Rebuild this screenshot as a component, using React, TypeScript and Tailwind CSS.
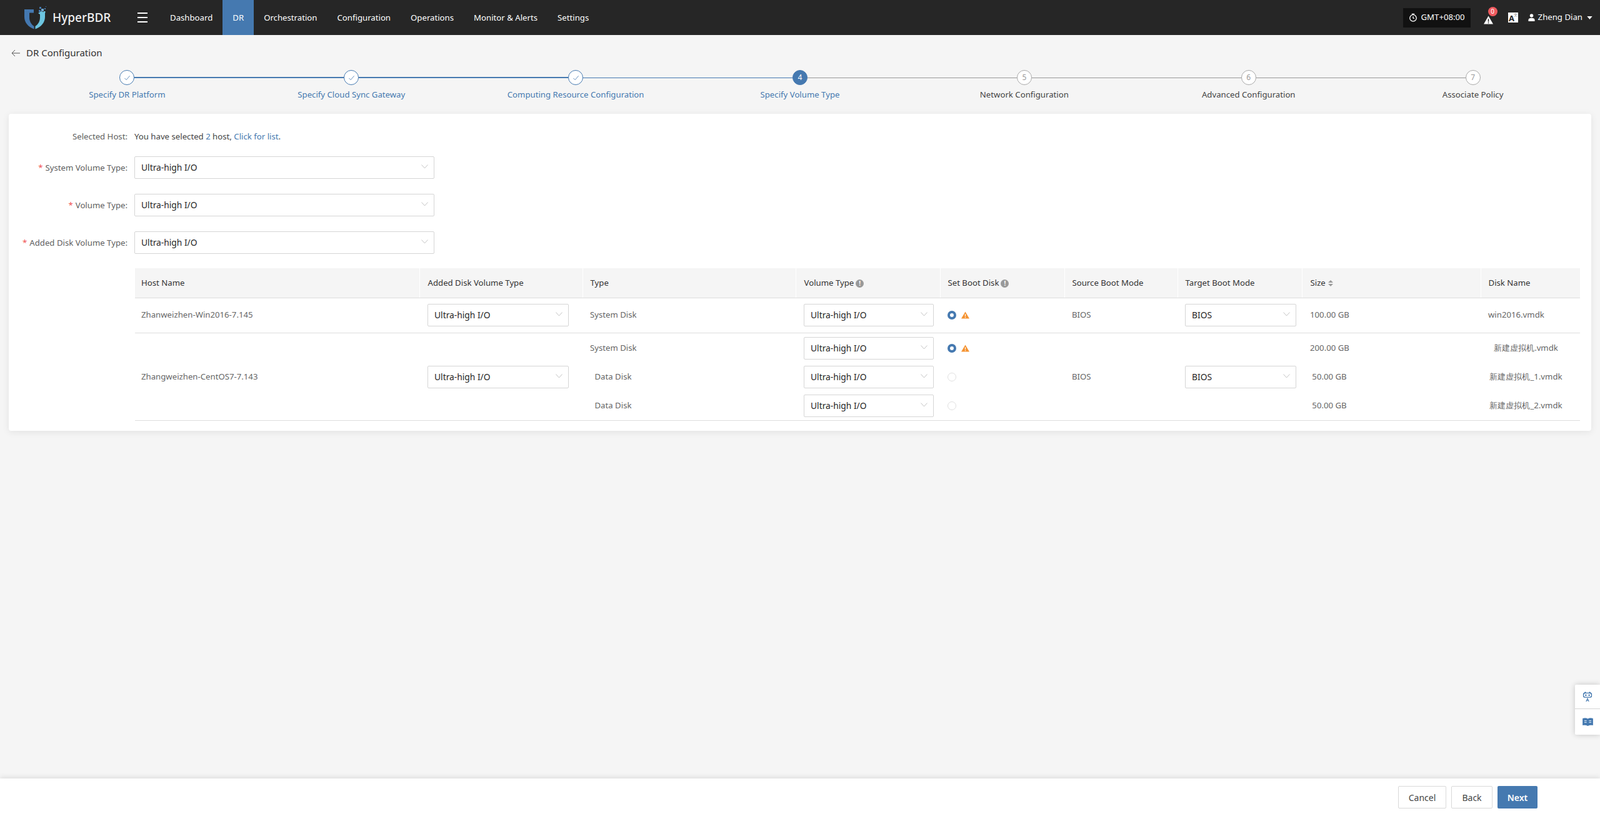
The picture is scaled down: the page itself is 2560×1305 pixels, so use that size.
const navItems = ["Dashboard", "DR", "Orchestration", "Configuration", "Operations", "Monitor & Alerts", "Settings"];

const steps = [
  "Specify DR Platform",
  "Specify Cloud Sync Gateway",
  "Computing Resource Configuration",
  "Specify Volume Type",
  "Network Configuration",
  "Advanced Configuration",
  "Associate Policy",
];

const Logo = () => (
  <svg viewBox="38 8 36 40" className="w-9 h-10 shrink-0">
    <path d="M39 15H54V20.5H47V28C47 34 50 39 54.500 42V46.500C45 43 39 36 39 27Z" fill="#4478b0" />
    <path d="M72 20V27C72 36 66 43 56.500 46.500V42C61 39 64 34 64 28V23L61 21 66 18Z" fill="#6cc5e0" />
    <rect x="63" y="11" width="3" height="3" fill="#4478b0" />
    <rect x="66" y="14" width="4" height="4" fill="#6fa8d0" />
    <rect x="70" y="18" width="2.500" height="2.500" fill="#6cc5e0" />
    <rect x="71" y="13" width="2" height="2" fill="#4478b0" />
    <rect x="73" y="10" width="1" height="1" fill="#4478b0" />
    <rect x="62" y="16" width="3" height="3" fill="#4478b0" />
  </svg>
);

const Header = () => (
  <header className="h-14 shrink-0 bg-[#262626] flex items-center text-white text-[13.200px]">
    <div className="flex items-center ml-[38px] gap-[10px] w-[182px]">
      <Logo />
      <span className="text-[19px] font-medium text-[#f0f0f0]">HyperBDR</span>
    </div>
    <div className="w-4 h-4 flex flex-col justify-between">
      <span className="h-[2px] bg-white" />
      <span className="h-[2px] bg-white" />
      <span className="h-[2px] bg-white" />
    </div>
    <nav className="flex h-full ml-5">
      {navItems.map((item) => (
        <a key={item} className={`h-full flex items-center px-4 pt-[1px] ${item === "DR" ? "bg-[#4579b0]" : ""}`}>
          {item}
        </a>
      ))}
    </nav>
    <div className="ml-auto flex items-center">
      <div className="h-[31px] w-[108px] bg-[#111111] flex items-center justify-center gap-[6px]">
        <svg viewBox="0 0 16 16" className="w-[14px] h-[14px]" fill="none" stroke="white" strokeWidth="1.500">
          <circle cx="8" cy="9" r="6" />
          <path d="M8 6V9L10 10M5.500 1.500H10.500" />
        </svg>
        <span>GMT+08:00</span>
      </div>
      <div className="relative ml-[21px] w-[15px] h-[15px] mt-[8px]">
        <svg viewBox="0 0 16 14" className="w-[15px] h-[14px]">
          <path d="M8 0L16 14H0Z" fill="white" />
          <path d="M7.200 5H8.800V10H7.200ZM7.200 11H8.800V12.500H7.200Z" fill="#262626" />
        </svg>
        <span className="absolute -top-[14px] left-[7px] w-[15px] h-[15px] rounded-full bg-[#ef5a5f] text-[10px] leading-[15px] text-center">
          0
        </span>
      </div>
      <div className="ml-[24px] w-4 h-4 bg-white flex items-center justify-center text-[#262626] relative">
        <span className="text-[13px] font-bold leading-none mr-[4px] mt-[2px]">A</span>
        <span className="absolute top-[1px] right-[1px] text-[6px] leading-none text-[#777]">文</span>
      </div>
      <svg viewBox="0 0 12 13" className="ml-4 w-[11px] h-[12px]" fill="white">
        <circle cx="6" cy="3.200" r="3" />
        <path d="M0.500 13V10.500C0.500 8.500 2.500 7.300 6 7.300S11.500 8.500 11.500 10.500V13Z" />
      </svg>
      <span className="ml-[5px]">Zheng Dian</span>
      <svg viewBox="0 0 10 6" className="ml-[7px] mr-3 w-[9px] h-[5px]" fill="white">
        <path d="M0 0H10L5 6Z" />
      </svg>
    </div>
  </header>
);

// connector segment classes, index = gap between step i and i+1
const connector = [
  "h-[2px] bg-[#4579b0]",
  "h-[2px] bg-[#4579b0]",
  "h-[1px] bg-[#4579b0]",
  "h-[1px] bg-[#999999]",
  "h-[1px] bg-[#999999]",
  "h-[1px] bg-[#999999]",
];

const Stepper = () => (
  <div className="grid grid-cols-7 mx-[24px] mt-[14px]">
    {steps.map((label, i) => {
      const done = i < 3;
      const active = i === 3;
      return (
        <div key={label} className="flex flex-col items-center">
          <div className="flex items-center w-full h-6">
            <span className={`flex-1 ${i === 0 ? "" : connector[i - 1]}`} />
            <span
              className={`w-6 h-6 rounded-full border flex items-center justify-center text-[12px] shrink-0 ${
                active
                  ? "bg-[#4579b0] border-[#4579b0] text-white"
                  : done
                    ? "bg-white border-[#4579b0] text-[#4579b0]"
                    : "bg-white border-[#a8a8a8] text-[#999999]"
              }`}
            >
              {done ? (
                <svg viewBox="0 0 12 12" className="w-[11px] h-[11px]" fill="none" stroke="#4579b0" strokeWidth="0.900">
                  <path d="M1.500 6.500L4.500 9.500L10.500 2.500" />
                </svg>
              ) : (
                i + 1
              )}
            </span>
            <span className={`flex-1 ${i === 6 ? "" : connector[i]}`} />
          </div>
          <span className={`mt-[5px] leading-5 text-[13.200px] ${done || active ? "text-[#4579b0]" : "text-[#444444]"}`}>{label}</span>
        </div>
      );
    })}
  </div>
);

const Select = ({ value, width }: { value: string; width: string }) => (
  <div className={`${width} h-9 bg-white border border-[#d5d5d5] rounded-[2px] flex items-center justify-between pl-[10px] pr-[9px] text-[13.800px] text-[#262626]`}>
    <span className="pt-[1px]">{value}</span>
    <svg viewBox="0 0 11 7" className="w-[11px] h-[7px] -mt-[3px]" fill="none" stroke="#c4c4c4" strokeWidth="1">
      <path d="M0.500 0.500L5.500 6L10.500 0.500" />
    </svg>
  </div>
);

const FormRow = ({ label, required, children }: { label: string; required?: boolean; children: React.ReactNode }) => (
  <div className="flex items-center">
    <label className="w-[190px] text-right text-[13.200px] text-[#606060] shrink-0 mr-[11px] pt-[1px] whitespace-nowrap">
      {required && <span className="text-[#f05050] mr-1">*</span>}
      {label}:
    </label>
    {children}
  </div>
);

const Info = () => (
  <span className="inline-flex w-[13px] h-[13px] rounded-full bg-[#999999] text-white text-[10px] font-bold leading-none items-center justify-center ml-[3px] align-[0px]">
    !
  </span>
);

const Radio = ({ on }: { on?: boolean }) =>
  on ? (
    <div className="flex items-center gap-[8px]">
      <span className="w-[14px] h-[14px] rounded-full border-[4px] border-[#4579b0] bg-white" />
      <svg viewBox="0 0 14 12" className="w-[13px] h-[12px]">
        <path d="M7 0L14 12H0Z" fill="#f59331" />
        <path d="M6.300 4H7.700V8H6.300ZM6.300 9H7.700V10.500H6.300Z" fill="white" />
      </svg>
    </div>
  ) : (
    <span className="block w-[14px] h-[14px] rounded-full border border-[#e0e0e0] bg-white" />
  );

const th = "h-[47px] bg-[#f5f5f5] border-b border-b-[#dddddd] border-r border-r-white pl-3 pt-[2px] text-left font-normal text-[13.200px] text-[#333333] whitespace-nowrap";
const td = "pl-3 text-[13.200px] text-[#666666] whitespace-nowrap";
const wide = `${td} pl-[13px]`;
// the first row of a multi-disk host sits slightly lower than its cell's centre
const first = "pt-[2px]";

const TypeLabel = ({ children }: { children: string }) => <div className="w-[74px] text-center">{children}</div>;
const SizeLabel = ({ children }: { children: string }) => <div className="w-[62px] text-center">{children}</div>;
const DiskLabel = ({ children }: { children: string }) => <div className="w-[121px] text-center">{children}</div>;

const HostTable = () => (
  <table className="w-[2312px] table-fixed border-collapse ml-[202px] mt-[23px]">
    <colgroup>
      <col className="w-[455px]" />
      <col className="w-[261px]" />
      <col className="w-[341px]" />
      <col className="w-[231px]" />
      <col className="w-[199px]" />
      <col className="w-[181px]" />
      <col className="w-[199px]" />
      <col className="w-[286px]" />
      <col className="w-[159px]" />
    </colgroup>
    <thead>
      <tr>
        <th className={`${th} pl-[10px]`}>Host Name</th>
        <th className={`${th} pl-[13px]`}>Added Disk Volume Type</th>
        <th className={th}>Type</th>
        <th className={`${th} pl-[13px]`}>Volume Type<Info /></th>
        <th className={th}>Set Boot Disk<Info /></th>
        <th className={th}>Source Boot Mode</th>
        <th className={th}>Target Boot Mode</th>
        <th className={`${th} pl-[13px]`}>
          <span className="inline-flex items-center gap-[4px]">
            Size
            <svg viewBox="0 0 8 10" className="w-2 h-[10px]" fill="#999999">
              <path d="M4 0L8 4H0ZM0 6H8L4 10Z" />
            </svg>
          </span>
        </th>
        <th className={`${th} border-r-0`}>Disk Name</th>
      </tr>
    </thead>
    <tbody>
      <tr className="h-14 border-b border-b-[#dddddd]">
        <td className={`${td} pl-[10px]`}>Zhanweizhen-Win2016-7.145</td>
        <td className={wide}><Select value="Ultra-high I/O" width="w-[226px]" /></td>
        <td className={td}><TypeLabel>System Disk</TypeLabel></td>
        <td className={wide}><Select value="Ultra-high I/O" width="w-[208px]" /></td>
        <td className={td}><Radio on /></td>
        <td className={td}>BIOS</td>
        <td className={td}><Select value="BIOS" width="w-[178px]" /></td>
        <td className={wide}>100.00 GB</td>
        <td className={td}>win2016.vmdk</td>
      </tr>
      <tr className="h-[48px]">
        <td rowSpan={3} className={`${td} pl-[10px] ${first}`}>Zhangweizhen-CentOS7-7.143</td>
        <td rowSpan={3} className={`${wide} ${first}`}><Select value="Ultra-high I/O" width="w-[226px]" /></td>
        <td className={`${td} ${first}`}><TypeLabel>System Disk</TypeLabel></td>
        <td className={`${wide} ${first}`}><Select value="Ultra-high I/O" width="w-[208px]" /></td>
        <td className={`${td} ${first}`}><Radio on /></td>
        <td rowSpan={3} className={`${td} ${first}`}>BIOS</td>
        <td rowSpan={3} className={`${td} ${first}`}><Select value="BIOS" width="w-[178px]" /></td>
        <td className={`${wide} ${first}`}><SizeLabel>200.00 GB</SizeLabel></td>
        <td className={`${td} ${first}`}><DiskLabel>新建虚拟机.vmdk</DiskLabel></td>
      </tr>
      <tr className="h-[46px]">
        <td className={td}><TypeLabel>Data Disk</TypeLabel></td>
        <td className={wide}><Select value="Ultra-high I/O" width="w-[208px]" /></td>
        <td className={td}><Radio /></td>
        <td className={wide}><SizeLabel>50.00 GB</SizeLabel></td>
        <td className={td}><DiskLabel>新建虚拟机_1.vmdk</DiskLabel></td>
      </tr>
      <tr className="h-[46px] border-b border-b-[#dddddd]">
        <td className={td}><TypeLabel>Data Disk</TypeLabel></td>
        <td className={wide}><Select value="Ultra-high I/O" width="w-[208px]" /></td>
        <td className={td}><Radio /></td>
        <td className={wide}><SizeLabel>50.00 GB</SizeLabel></td>
        <td className={td}><DiskLabel>新建虚拟机_2.vmdk</DiskLabel></td>
      </tr>
    </tbody>
  </table>
);

const SideTools = () => (
  <div className="fixed right-0 top-[1095px] w-10 h-20 bg-white rounded-l-[2px] shadow-[0_0_10px_rgba(0,0,0,0.2)] flex flex-col">
    <div className="h-[39px] border-b border-b-[#d5d5d5] flex items-center justify-center">
      <svg viewBox="0 0 18 20" className="w-4 h-[18px]">
        <path d="M3 3L5 1L6.500 3H11.500L13 1L15 3C16.500 3.500 17 4.500 17 6V9C17 11 16 12 14 12H4C2 12 1 11 1 9V6C1 4.500 1.500 3.500 3 3Z" fill="#4579b0" />
        <rect x="2.500" y="4.500" width="13" height="6" rx="2.500" fill="white" />
        <circle cx="6" cy="7.500" r="1.500" fill="#4579b0" />
        <circle cx="12" cy="7.500" r="1.500" fill="#4579b0" />
        <path d="M6.500 19L9 13.500L11.500 19M7.500 17H10.500" fill="none" stroke="#4579b0" strokeWidth="1.200" />
      </svg>
    </div>
    <div className="flex-1 flex items-center justify-center">
      <svg viewBox="0 0 18 14" className="w-[17px] h-[13px]">
        <path d="M0 1C3 0 6.500 0 9 1.500C11.500 0 15 0 18 1V13C15 12.500 11.500 12.500 9 14C6.500 12.500 3 12.500 0 13Z" fill="#4579b0" />
        <path d="M3 5H7M3 8H7M11 5H15M11 8H15" stroke="#cfe0f0" strokeWidth="1.200" />
      </svg>
    </div>
  </div>
);

export default function App() {
  return (
    <div className="h-screen flex flex-col bg-[#f5f5f5] font-['Open_Sans','Noto_Sans_CJK_SC',sans-serif] overflow-hidden">
      <Header />
      <main className="flex-1 min-h-0">
        <div className="flex items-center h-[26px] mt-4 ml-[18px] text-[#333333]">
          <svg viewBox="0 0 14 12" className="w-[14px] h-3" fill="none" stroke="#555555" strokeWidth="1">
            <path d="M14 6H1M6 1L1 6L6 11" />
          </svg>
          <span className="ml-[10px] text-[15px] -mt-[1px]">DR Configuration</span>
        </div>
        <Stepper />
        <section className="mx-[14px] mt-[21px] bg-white rounded-[4px] shadow-[0_2px_12px_rgba(0,0,0,0.08)] pt-[18px] pb-[16px]">
          <div className="h-9 flex items-center">
            <FormRow label="Selected Host">
              <span className="text-[13.200px] text-[#444444] pt-[1px]">
                You have selected <span className="text-[#4579b0]">2</span> host, <span className="text-[#4579b0]">Click for list</span>.
              </span>
            </FormRow>
          </div>
          <div className="mt-[14px] flex flex-col gap-6">
            <FormRow label="System Volume Type" required><Select value="Ultra-high I/O" width="w-[480px]" /></FormRow>
            <FormRow label="Volume Type" required><Select value="Ultra-high I/O" width="w-[480px]" /></FormRow>
            <FormRow label="Added Disk Volume Type" required><Select value="Ultra-high I/O" width="w-[480px]" /></FormRow>
          </div>
          <HostTable />
        </section>
      </main>
      <footer className="h-[60px] shrink-0 bg-white shadow-[0_-2px_8px_rgba(0,0,0,0.1)] flex items-center justify-end gap-2 pr-[100px] text-[14px]">
        <button className="w-[77px] h-9 border border-[#d9d9d9] rounded-[2px] text-[#444444]">Cancel</button>
        <button className="w-[66px] h-9 border border-[#d9d9d9] rounded-[2px] text-[#444444]">Back</button>
        <button className="w-[64px] h-9 bg-[#4579b0] rounded-[2px] text-white font-semibold">Next</button>
      </footer>
      <SideTools />
    </div>
  );
}
